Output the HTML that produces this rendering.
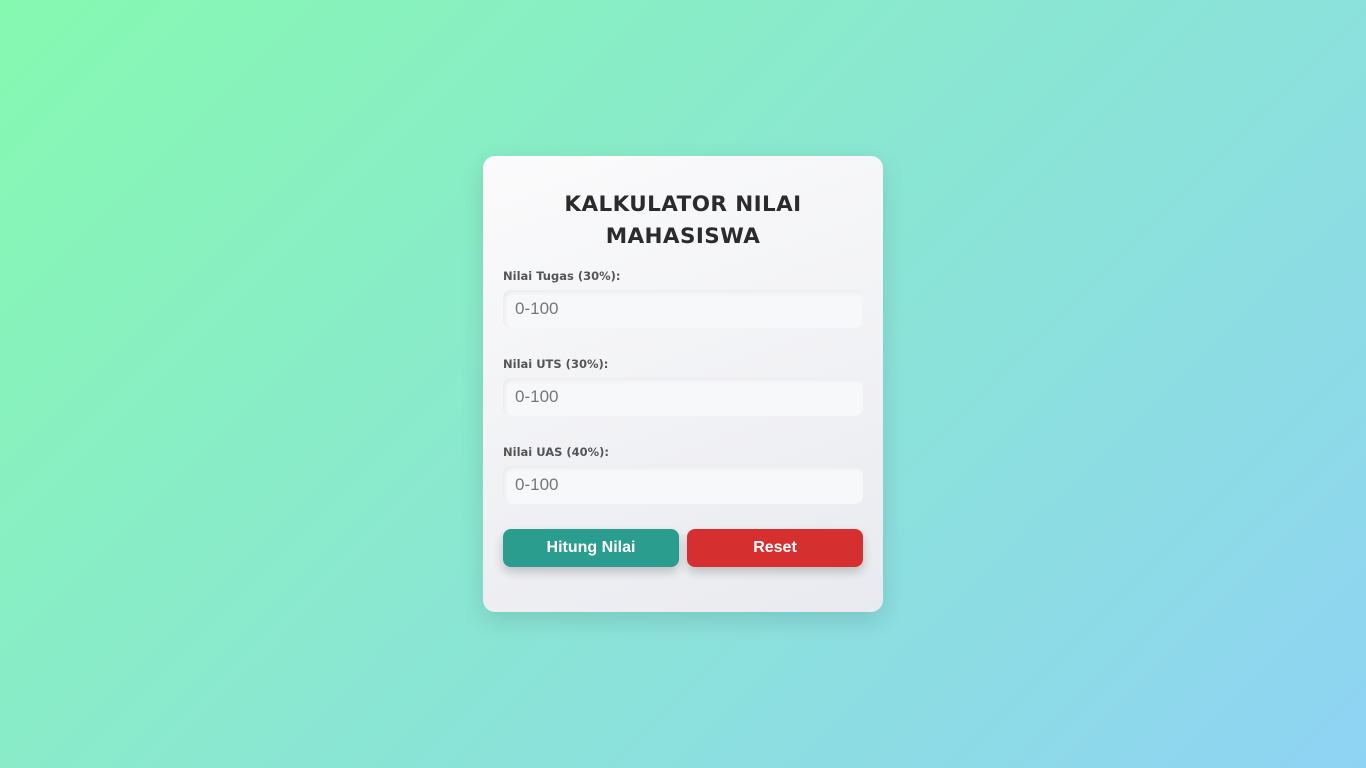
<!DOCTYPE html>
<html><head><style>
html,body{margin:0;height:100%;}
body{width:1366px;height:768px;background:linear-gradient(135deg,#86f9b0 0%,#8ae6d3 50%,#8fd3f4 100%);font-family:"DejaVu Sans","Liberation Sans",sans-serif;position:relative;overflow:hidden;}
.card{position:absolute;left:483px;top:156px;width:400px;height:456px;box-sizing:border-box;border-radius:12px;background:linear-gradient(160deg,#fbfbfc,#e9eaef);box-shadow:0 8px 24px rgba(0,0,0,0.12);padding:0 20px;}
.t{position:absolute;left:0;width:400px;text-align:center;font-size:21.5px;font-weight:bold;color:#2b2b2b;letter-spacing:0.4px;line-height:32px;}
.lbl{position:absolute;left:20px;font-size:11.5px;font-weight:bold;color:#555;}
.in{position:absolute;left:20px;width:360px;height:38px;border-radius:8px;background:#f7f8fa;box-shadow:inset 2px 2px 5px rgba(0,0,0,0.06);font-family:"Liberation Sans",sans-serif;font-size:17px;color:#777;line-height:38px;padding-left:12px;box-sizing:border-box;}
.btn{position:absolute;top:373px;width:176px;height:38px;border-radius:8px;color:#fff;font-family:"Liberation Sans",sans-serif;font-weight:bold;font-size:16px;text-align:center;line-height:38px;box-shadow:0 5px 10px rgba(0,0,0,0.2);}
</style></head><body>
<div class="card">
<div class="t" style="top:33px">KALKULATOR NILAI</div>
<div class="t" style="top:65px">MAHASISWA</div>
<div class="lbl" style="top:113px">Nilai Tugas (30%):</div>
<div class="in" style="top:134px">0-100</div>
<div class="lbl" style="top:201px">Nilai UTS (30%):</div>
<div class="in" style="top:222px">0-100</div>
<div class="lbl" style="top:289px">Nilai UAS (40%):</div>
<div class="in" style="top:310px">0-100</div>
<div class="btn" style="left:20px;background:#2a9d8f">Hitung Nilai</div>
<div class="btn" style="left:204px;background:#d62f2f">Reset</div>
</div>
</body></html>
